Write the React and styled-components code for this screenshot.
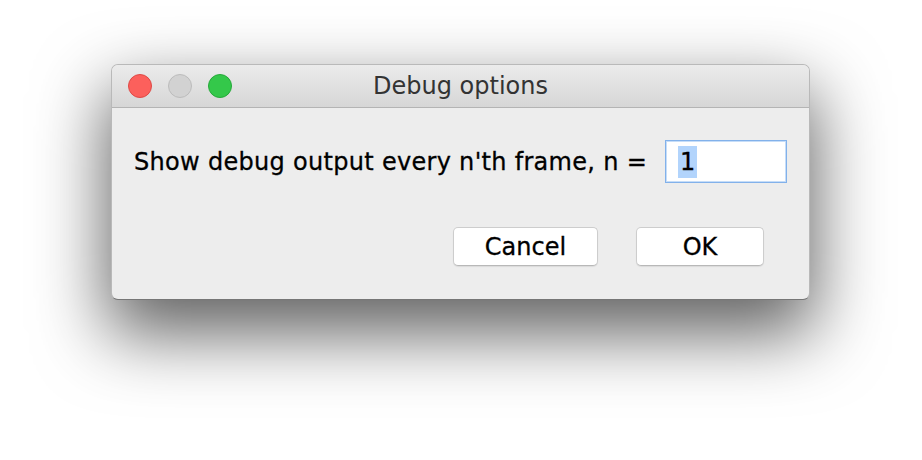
import React from "react"
import styled, { createGlobalStyle } from "styled-components"

const GlobalStyle = createGlobalStyle`
  html, body {
    margin: 0;
    padding: 0;
    background: #ffffff;
  }
  body {
    font-family: "DejaVu Sans", "Noto Sans", sans-serif;
  }
`

const Page = styled.div`
  width: 922px;
  height: 460px;
  padding-top: 64px;
  box-sizing: border-box;
  overflow: hidden;
`

const Window = styled.div`
  width: 699px;
  height: 236px;
  margin-left: 111px;
  box-sizing: border-box;
  border-radius: 7px;
  background: #ededed;
  border: 1px solid rgba(0, 0, 0, 0.22);
  border-bottom-color: rgba(0, 0, 0, 0.5);
  box-shadow: 0 30px 70px 4px rgba(0, 0, 0, 0.62);
  overflow: hidden;
  display: flex;
  flex-direction: column;
`

const TitleBar = styled.div`
  height: 43px;
  box-sizing: border-box;
  background: linear-gradient(#ebebeb, #d6d6d6);
  border-bottom: 1px solid #b4b4b4;
  display: flex;
  align-items: center;
  padding-left: 16px;
  position: relative;
`

const Lights = styled.div`
  display: flex;
  gap: 16px;
`

const Light = styled.span`
  width: 24px;
  height: 24px;
  box-sizing: border-box;
  border-radius: 50%;
  background: ${p => p.$fill};
  border: 1px solid ${p => p.$edge};
`

const Title = styled.div`
  position: absolute;
  left: 0;
  right: 0;
  top: 0;
  bottom: 0;
  display: flex;
  align-items: center;
  justify-content: center;
  font-size: 24px;
  color: #333;
  pointer-events: none;
`

const Body = styled.div`
  flex: 1;
  display: flex;
  flex-direction: column;
  padding: 32px 22px 0 22px;
`

const FieldRow = styled.div`
  display: flex;
  align-items: center;
`

const Label = styled.span`
  font-size: 24px;
  letter-spacing: 0.3px;
  white-space: nowrap;
  flex-shrink: 0;
  color: #000;
  -webkit-text-stroke: 0.3px #000;
`

const TextField = styled.div`
  width: 122px;
  height: 43px;
  box-sizing: border-box;
  flex-shrink: 0;
  margin-left: auto;
  background: #fff;
  border: 1px solid #82b1ea;
  box-shadow: inset 0 0 0 1px #c6ddf8;
  display: flex;
  align-items: center;
  padding-left: 12px;
  font-size: 24px;
  color: #000;
  -webkit-text-stroke: 0.3px #000;
`

const Selected = styled.span`
  background: #b2d4fc;
  height: 32px;
  line-height: 32px;
  padding: 0 2px;
`

const ButtonRow = styled.div`
  display: flex;
  justify-content: flex-end;
  gap: 38px;
  margin-top: 44px;
  padding-right: 23px;
`

const Button = styled.button`
  width: ${p => p.$width}px;
  height: 39px;
  box-sizing: border-box;
  background: #fff;
  border: 1px solid #cdcdcd;
  border-bottom-color: #b8b8b8;
  border-radius: 5px;
  box-shadow: 0 1px 1px rgba(0, 0, 0, 0.08);
  font-family: "DejaVu Sans", sans-serif;
  font-size: 24px;
  color: #000;
  -webkit-text-stroke: 0.3px #000;
  padding: 0;
`

export default function App() {
  return (
    <>
      <GlobalStyle />
      <Page>
        <Window>
          <TitleBar>
            <Lights>
              <Light $fill="#fc605c" $edge="#de4a46" />
              <Light $fill="#d2d2d2" $edge="#bcbcbc" />
              <Light $fill="#34c84a" $edge="#26a93a" />
            </Lights>
            <Title>Debug options</Title>
          </TitleBar>
          <Body>
            <FieldRow>
              <Label>Show debug output every n'th frame, n =</Label>
              <TextField>
                <Selected>1</Selected>
              </TextField>
            </FieldRow>
            <ButtonRow>
              <Button $width={145}>Cancel</Button>
              <Button $width={128}>OK</Button>
            </ButtonRow>
          </Body>
        </Window>
      </Page>
    </>
  )
}
